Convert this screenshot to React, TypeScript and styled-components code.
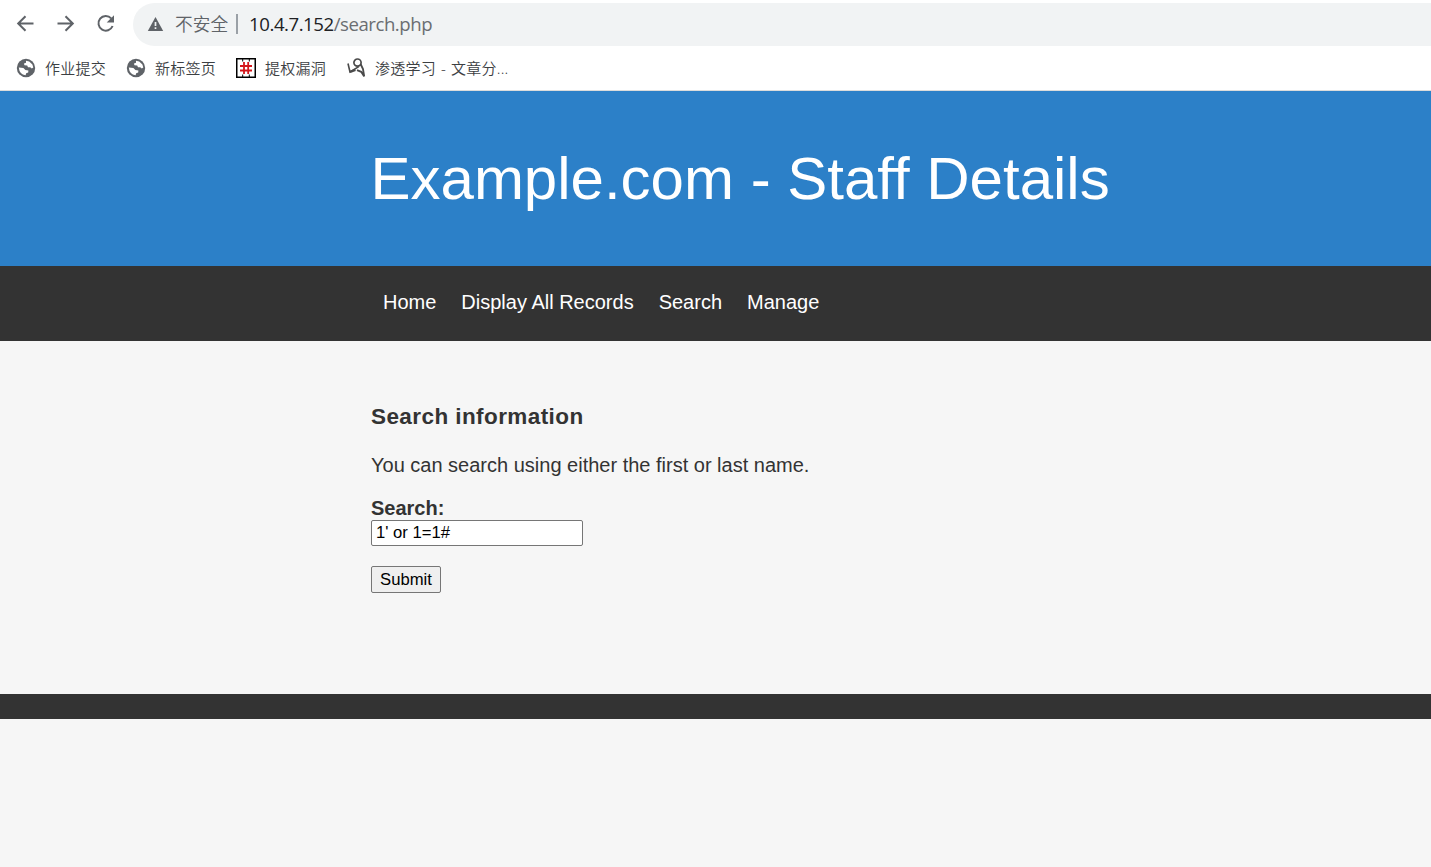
import React from "react";
import styled, { createGlobalStyle } from "styled-components";

const GlobalStyle = createGlobalStyle`
  *, *::before, *::after { box-sizing: border-box; }
  html, body { margin: 0; height: 100%; }
  body {
    background: #f6f6f6;
    color: #333;
    font: 20px/23px "Liberation Sans", Arial, sans-serif;
    overflow: hidden;
  }
`;

const BrowserBar = styled.div`
  height: 91px;
  background: #fff;
  border-bottom: 1px solid #dcdcdc;
  font-family: "Open Sans", "Noto Sans CJK SC", sans-serif;
  white-space: nowrap;
`;

const Toolbar = styled.div`
  display: flex;
  align-items: center;
  height: 46px;
  padding: 3px 0 0 15px;
`;

const ToolButton = styled.span`
  display: flex;
  width: 40px;
  height: 40px;
  padding-top: 8px;
  flex: none;
`;

const AddressBar = styled.div`
  display: flex;
  align-items: center;
  flex: 1;
  height: 43px;
  margin-left: -2px;
  padding: 0 0 1px 14px;
  background: #f1f3f4;
  border-radius: 22px 0 0 22px;
`;

const Warning = styled.span`
  margin-left: 11px;
  font-size: 17.7px;
  color: #5f6368;
  font-weight: 350;
`;

const Divider = styled.i`
  width: 2px;
  height: 20px;
  margin: 0 11px 0 8px;
  background: #9aa0a6;
`;

const Url = styled.span`
  padding-bottom: 2px;
  font-size: 18.6px;
  letter-spacing: -0.45px;
  color: #6a6d71;
`;

const Host = styled.span`
  color: #202124;
`;

const Bookmarks = styled.div`
  display: flex;
  align-items: center;
  height: 44px;
  padding-left: 16px;
  gap: 20px;
`;

const Bookmark = styled.span`
  display: flex;
  align-items: center;
  gap: 9px;
  font-family: "Noto Sans", "Noto Sans CJK SC", sans-serif;
  font-size: 15px;
  font-weight: 350;
  letter-spacing: 0.25px;
  word-spacing: 0.8px;
  color: #3c4043;
  line-height: 20px;
`;

const Banner = styled.header`
  height: 175px;
  padding: 53px 0 0 370.5px;
  background: #2c80c8;
`;

const Title = styled.h1`
  margin: 0;
  color: #fff;
  font-size: 60px;
  font-weight: 400;
  line-height: 69px;
  white-space: nowrap;
`;

const Nav = styled.nav`
  display: flex;
  gap: 25px;
  height: 75px;
  padding: 25px 0 0 383px;
  background: #333;
`;

const NavLink = styled.a`
  color: #fff;
  text-decoration: none;
`;

const Content = styled.main`
  height: 353px;
  padding: 63px 0 0 371px;
`;

const Heading = styled.h3`
  margin: 0 0 24px;
  font-size: 22.5px;
  line-height: 26px;
  letter-spacing: 0.42px;
`;

const Paragraph = styled.p`
  margin: 0 0 20px;
`;

const Label = styled.label`
  display: block;
  font-weight: 700;
`;

const TextInput = styled.input`
  display: block;
  width: 212px;
  height: 26px;
  margin: 0 0 20px;
  padding: 1px 4px;
  border: 1px solid #767676;
  border-radius: 2px;
  background: #fff;
  color: #000;
  font: 16.67px "Liberation Sans", Arial, sans-serif;
`;

const SubmitButton = styled.button`
  display: block;
  width: 70px;
  height: 27px;
  padding: 0;
  border: 1px solid #767676;
  border-radius: 2px;
  background: #efefef;
  color: #000;
  font: 16.67px "Liberation Sans", Arial, sans-serif;
`;

const Footer = styled.footer`
  height: 25px;
  background: #333;
`;

const Globe = () => (
  <svg width="20" height="20" viewBox="0 0 20 20">
    <circle cx="10" cy="10" r="9.2" fill="#5f6368" />
    <path
      d="M10 2.8 L13.2 3.4 L16.4 6.4 L17.3 9.6 L15.8 10.6 L14.2 9.2 H12 L11.2 7.6 L8.4 7.2 L8 5.4 L10 4.8 Z M2.8 9.6 L7.4 9.9 L9.4 12 L12.4 12.6 L12.2 14.4 L10.2 15.2 L9.6 17.2 Q3.4 16.6 2.8 9.6 Z"
      fill="#fff"
    />
  </svg>
);

const App = () => (
  <>
    <GlobalStyle />
    <BrowserBar>
      <Toolbar>
        <ToolButton>
          <svg width="20" height="20" viewBox="0 0 20 20" fill="none" stroke="#5f6368" strokeWidth="2">
            <path d="M18.5 10.5H3.5M10.5 3.2L3.2 10.5L10.5 17.8" />
          </svg>
        </ToolButton>
        <ToolButton>
          <svg width="20" height="20" viewBox="0 0 20 20" fill="none" stroke="#5f6368" strokeWidth="2">
            <path d="M2.5 10.5H17.5M10.5 3.2L17.8 10.5L10.5 17.8" />
          </svg>
        </ToolButton>
        <ToolButton>
          <svg width="21" height="20" viewBox="0 0 21 20">
            <path d="M16.2 5.4A7.3 7.3 0 1 0 17.6 13" fill="none" stroke="#5f6368" strokeWidth="2" />
            <path d="M19 2.3V9.6H11.7Z" fill="#5f6368" />
          </svg>
        </ToolButton>
        <AddressBar>
          <svg width="17" height="16" viewBox="0 0 17 16">
            <path d="M8.5 1L16.2 15H.8Z" fill="#5f6368" />
            <path d="M8.5 6V10M8.5 11.3V13" stroke="#f1f3f4" strokeWidth="1.7" />
          </svg>
          <Warning>不安全</Warning>
          <Divider />
          <Url>
            <Host>10.4.7.152</Host>/search.php
          </Url>
        </AddressBar>
      </Toolbar>
      <Bookmarks>
        <Bookmark>
          <Globe />
          作业提交
        </Bookmark>
        <Bookmark>
          <Globe />
          新标签页
        </Bookmark>
        <Bookmark>
          <svg width="20" height="20" viewBox="0 0 20 20">
            <path d="M.75 .75H19.25V19.25H.75Z" fill="#fff" stroke="#000" strokeWidth="1.5" />
            <path d="M6.7 1V3.5M13.3 1V3.5M6.7 16.5V19M13.3 16.5V19" stroke="#000" strokeWidth="1" />
            <path d="M8 4V16M12.2 4V16M4 8H16M4 12.5H16" stroke="#d3161b" strokeWidth="1.8" />
          </svg>
          提权漏洞
        </Bookmark>
        <Bookmark>
          <svg width="20" height="20" viewBox="0 0 20 20" fill="none" stroke="#4a4a4a">
            <circle cx="11.5" cy="4.6" r="3.6" strokeWidth="1.7" />
            <path d="M2 5.5L4 14L12.8 8.6" strokeWidth="1.6" />
            <path d="M4 14L9.4 11.8" strokeWidth="2.4" />
            <path d="M14.6 6L17 11L18.2 18.5M11 12.2L15.2 13.8L18.2 18.5" strokeWidth="1.8" />
          </svg>
          渗透学习 - 文章分...
        </Bookmark>
      </Bookmarks>
    </BrowserBar>
    <Banner>
      <Title>Example.com - Staff Details</Title>
    </Banner>
    <Nav>
      <NavLink>Home</NavLink>
      <NavLink>Display All Records</NavLink>
      <NavLink>Search</NavLink>
      <NavLink>Manage</NavLink>
    </Nav>
    <Content>
      <Heading>Search information</Heading>
      <Paragraph>You can search using either the first or last name.</Paragraph>
      <Label htmlFor="search">Search:</Label>
      <TextInput id="search" defaultValue="1' or 1=1#" />
      <SubmitButton>Submit</SubmitButton>
    </Content>
    <Footer />
  </>
);

export default App;
